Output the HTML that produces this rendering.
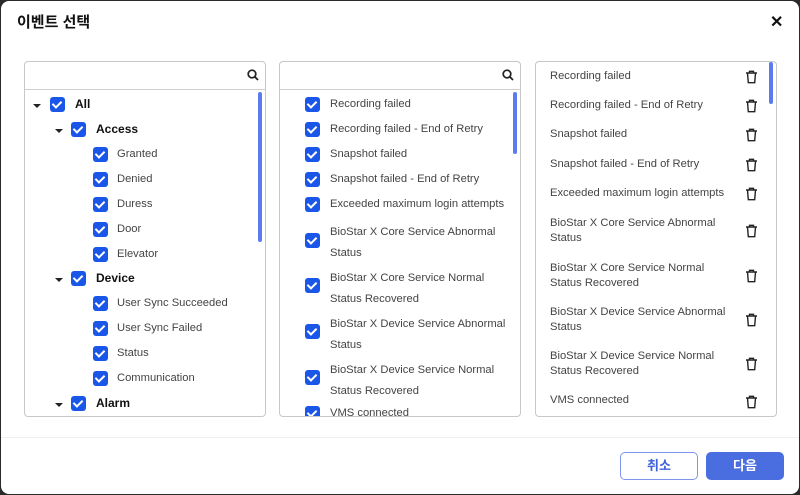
<!DOCTYPE html>
<html><head><meta charset="utf-8"><style>
*{box-sizing:border-box;margin:0;padding:0}
body{width:800px;height:495px;background:#2a2a2a;font-family:"Liberation Sans","Noto Sans CJK KR",sans-serif;overflow:hidden;position:relative}
.dlg{position:absolute;left:1px;top:1px;width:798px;height:493px;background:#fff;border-radius:8px}
.title{position:absolute;left:16px;top:10px;font-size:15px;font-weight:bold;color:#111}
.close{position:absolute;left:769px;top:11px;font-size:16px;font-weight:bold;color:#111}
.panel{position:absolute;top:60px;width:242px;height:356px;border:1px solid #c8c8c8;border-radius:4px;overflow:hidden}
.search{height:28px;border-bottom:1px solid #d0d0d0;position:relative}
.search svg{position:absolute;right:6px;top:7px}
.sb{position:absolute;right:3px;width:4px;background:#5b7cf0;border-radius:2px}
.t{position:absolute;font-size:11.2px;color:#444;white-space:nowrap}
.b{font-weight:bold;color:#111;font-size:12px}
.cb{position:absolute;width:15px;height:15px;background:#1a56e8;border-radius:3px}
.cb:after{content:"";position:absolute;left:4px;top:2px;width:4px;height:7px;border:solid #fff;border-width:0 2px 2px 0;transform:rotate(45deg)}
.ar{position:absolute;width:0;height:0;border-left:4px solid transparent;border-right:4px solid transparent;border-top:4px solid #222}
.tr{position:absolute;left:209px}
.sep{position:absolute;left:0;right:0;top:436px;border-top:1px solid #eee}
.btn{position:absolute;top:451px;width:78px;height:28px;border-radius:5px;font-size:13px;font-weight:bold;text-align:center;line-height:26px}
</style></head><body><div class="dlg">
<div class="title">이벤트 선택</div>
<div class="close">✕</div>

<div class="panel" style="left:23px">
 <div class="search"><svg width="12" height="12" viewBox="0 0 12 12"><circle cx="5" cy="5" r="3.8" fill="none" stroke="#222" stroke-width="1.7"/><line x1="8" y1="8" x2="11" y2="11" stroke="#222" stroke-width="1.8"/></svg></div>
 <div class="sb" style="top:30px;height:150px"></div>
 <div class="ar" style="left:8px;top:42px"></div><div class="cb" style="left:25px;top:35px"></div><div class="t b" style="left:50px;top:35px">All</div>
 <div class="ar" style="left:30px;top:67px"></div><div class="cb" style="left:46px;top:60px"></div><div class="t b" style="left:71px;top:60px">Access</div>
 <div class="cb" style="left:68px;top:85px"></div><div class="t" style="left:92px;top:86px">Granted</div>
 <div class="cb" style="left:68px;top:110px"></div><div class="t" style="left:92px;top:111px">Denied</div>
 <div class="cb" style="left:68px;top:135px"></div><div class="t" style="left:92px;top:136px">Duress</div>
 <div class="cb" style="left:68px;top:160px"></div><div class="t" style="left:92px;top:161px">Door</div>
 <div class="cb" style="left:68px;top:185px"></div><div class="t" style="left:92px;top:186px">Elevator</div>
 <div class="ar" style="left:30px;top:216px"></div><div class="cb" style="left:46px;top:209px"></div><div class="t b" style="left:71px;top:209px">Device</div>
 <div class="cb" style="left:68px;top:234px"></div><div class="t" style="left:92px;top:235px">User Sync Succeeded</div>
 <div class="cb" style="left:68px;top:259px"></div><div class="t" style="left:92px;top:260px">User Sync Failed</div>
 <div class="cb" style="left:68px;top:284px"></div><div class="t" style="left:92px;top:285px">Status</div>
 <div class="cb" style="left:68px;top:309px"></div><div class="t" style="left:92px;top:310px">Communication</div>
 <div class="ar" style="left:30px;top:341px"></div><div class="cb" style="left:46px;top:334px"></div><div class="t b" style="left:71px;top:334px">Alarm</div>
</div>

<div class="panel" style="left:278px">
 <div class="search"><svg width="12" height="12" viewBox="0 0 12 12"><circle cx="5" cy="5" r="3.8" fill="none" stroke="#222" stroke-width="1.7"/><line x1="8" y1="8" x2="11" y2="11" stroke="#222" stroke-width="1.8"/></svg></div>
 <div class="sb" style="top:30px;height:62px"></div>
 <div class="cb" style="left:25px;top:35px"></div><div class="t" style="left:50px;top:36px">Recording failed</div>
 <div class="cb" style="left:25px;top:60px"></div><div class="t" style="left:50px;top:61px">Recording failed - End of Retry</div>
 <div class="cb" style="left:25px;top:85px"></div><div class="t" style="left:50px;top:86px">Snapshot failed</div>
 <div class="cb" style="left:25px;top:110px"></div><div class="t" style="left:50px;top:111px">Snapshot failed - End of Retry</div>
 <div class="cb" style="left:25px;top:135px"></div><div class="t" style="left:50px;top:136px">Exceeded maximum login attempts</div>
 <div class="cb" style="left:25px;top:171px"></div><div class="t" style="left:50px;top:160px;line-height:21px">BioStar X Core Service Abnormal<br>Status</div>
 <div class="cb" style="left:25px;top:216px"></div><div class="t" style="left:50px;top:206px;line-height:21px">BioStar X Core Service Normal<br>Status Recovered</div>
 <div class="cb" style="left:25px;top:262px"></div><div class="t" style="left:50px;top:252px;line-height:21px">BioStar X Device Service Abnormal<br>Status</div>
 <div class="cb" style="left:25px;top:308px"></div><div class="t" style="left:50px;top:298px;line-height:21px">BioStar X Device Service Normal<br>Status Recovered</div>
 <div class="cb" style="left:25px;top:344px"></div><div class="t" style="left:50px;top:345px">VMS connected</div>
</div>

<div class="panel" style="left:534px">
 <div class="sb" style="top:0;height:42px"></div>
 <div class="t" style="left:14px;top:8px">Recording failed</div>
 <div class="t" style="left:14px;top:37px">Recording failed - End of Retry</div>
 <div class="t" style="left:14px;top:66px">Snapshot failed</div>
 <div class="t" style="left:14px;top:96px">Snapshot failed - End of Retry</div>
 <div class="t" style="left:14px;top:125px">Exceeded maximum login attempts</div>
 <div class="t" style="left:14px;top:154px;line-height:15px">BioStar X Core Service Abnormal<br>Status</div>
 <div class="t" style="left:14px;top:199px;line-height:15px">BioStar X Core Service Normal<br>Status Recovered</div>
 <div class="t" style="left:14px;top:243px;line-height:15px">BioStar X Device Service Abnormal<br>Status</div>
 <div class="t" style="left:14px;top:287px;line-height:15px">BioStar X Device Service Normal<br>Status Recovered</div>
 <div class="t" style="left:14px;top:332px">VMS connected</div>
 <svg class="tr" style="top:8px" width="13" height="14" viewBox="0 0 13 14"><path d="M1 3H12M4.5 3V1.3H8.5V3M2.5 3L3.3 12.7H9.7L10.5 3" fill="none" stroke="#222" stroke-width="1.4"/></svg>
 <svg class="tr" style="top:37px" width="13" height="14" viewBox="0 0 13 14"><path d="M1 3H12M4.5 3V1.3H8.5V3M2.5 3L3.3 12.7H9.7L10.5 3" fill="none" stroke="#222" stroke-width="1.4"/></svg>
 <svg class="tr" style="top:66px" width="13" height="14" viewBox="0 0 13 14"><path d="M1 3H12M4.5 3V1.3H8.5V3M2.5 3L3.3 12.7H9.7L10.5 3" fill="none" stroke="#222" stroke-width="1.4"/></svg>
 <svg class="tr" style="top:96px" width="13" height="14" viewBox="0 0 13 14"><path d="M1 3H12M4.5 3V1.3H8.5V3M2.5 3L3.3 12.7H9.7L10.5 3" fill="none" stroke="#222" stroke-width="1.4"/></svg>
 <svg class="tr" style="top:125px" width="13" height="14" viewBox="0 0 13 14"><path d="M1 3H12M4.5 3V1.3H8.5V3M2.5 3L3.3 12.7H9.7L10.5 3" fill="none" stroke="#222" stroke-width="1.4"/></svg>
 <svg class="tr" style="top:162px" width="13" height="14" viewBox="0 0 13 14"><path d="M1 3H12M4.5 3V1.3H8.5V3M2.5 3L3.3 12.7H9.7L10.5 3" fill="none" stroke="#222" stroke-width="1.4"/></svg>
 <svg class="tr" style="top:207px" width="13" height="14" viewBox="0 0 13 14"><path d="M1 3H12M4.5 3V1.3H8.5V3M2.5 3L3.3 12.7H9.7L10.5 3" fill="none" stroke="#222" stroke-width="1.4"/></svg>
 <svg class="tr" style="top:251px" width="13" height="14" viewBox="0 0 13 14"><path d="M1 3H12M4.5 3V1.3H8.5V3M2.5 3L3.3 12.7H9.7L10.5 3" fill="none" stroke="#222" stroke-width="1.4"/></svg>
 <svg class="tr" style="top:295px" width="13" height="14" viewBox="0 0 13 14"><path d="M1 3H12M4.5 3V1.3H8.5V3M2.5 3L3.3 12.7H9.7L10.5 3" fill="none" stroke="#222" stroke-width="1.4"/></svg>
 <svg class="tr" style="top:333px" width="13" height="14" viewBox="0 0 13 14"><path d="M1 3H12M4.5 3V1.3H8.5V3M2.5 3L3.3 12.7H9.7L10.5 3" fill="none" stroke="#222" stroke-width="1.4"/></svg>
</div>

<div class="sep"></div>
<div class="btn" style="left:619px;border:1.5px solid #7f97ea;color:#3f62d8;background:#fff">취소</div>
<div class="btn" style="left:705px;background:#4a6ee0;color:#fff;line-height:28px">다음</div>
</div></body></html>
